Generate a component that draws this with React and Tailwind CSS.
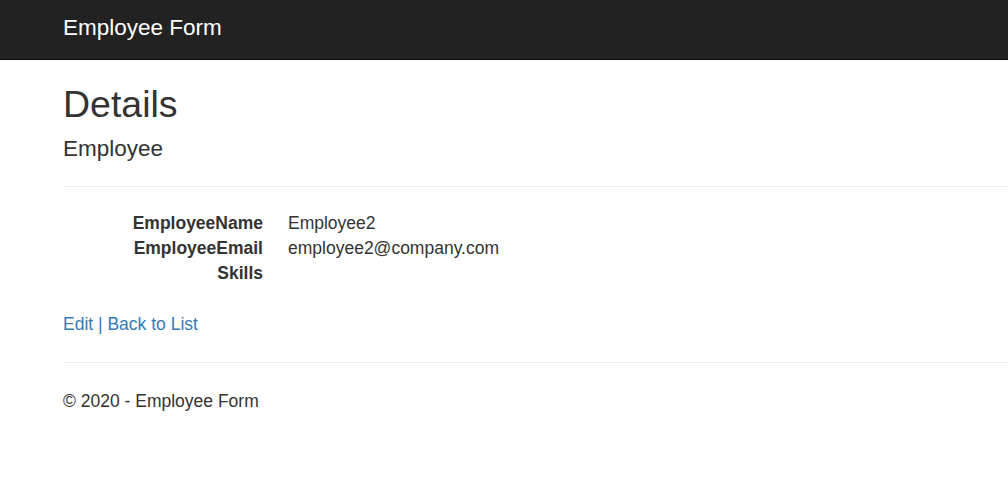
export default function App() {
    const rows = [
        ['EmployeeName', 'Employee2'],
        ['EmployeeEmail', 'employee2@company.com'],
        ['Skills', ''],
    ];

    return (
        <div className="min-h-[491px] bg-white text-[#333] font-['Liberation_Sans',Arial,sans-serif] text-[17.5px] leading-[25px]">
            <nav className="h-[60px] bg-[#222] border-b border-[#080808] flex items-center pl-[63px]">
                <span className="text-white text-[22.5px] leading-[25px] -mt-[4px]">Employee Form</span>
            </nav>

            <div className="pl-[63px]">
                <h2 className="text-[37.5px] leading-[41px] mt-[24px]">Details</h2>

                <div>
                    <h4 className="text-[22.5px] leading-[25px] mt-[11px]">Employee</h4>
                    <hr className="border-t border-[#eee] mt-[25px]" />
                    <dl className="mt-[24px]">
                        {rows.map(([label, value]) => (
                            <div key={label} className="flex">
                                <dt className="w-[200px] text-right font-bold shrink-0">{label}</dt>
                                <dd className="ml-[25px]">{value}</dd>
                            </div>
                        ))}
                    </dl>
                </div>

                <p className="mt-[26px]">
                    <a href="#" className="text-[#337ab7]">Edit</a>
                    <span className="text-[#337ab7]"> | </span>
                    <a href="#" className="text-[#337ab7]">Back to List</a>
                </p>

                <hr className="border-t border-[#eee] mt-[25px]" />
                <footer className="mt-[26px]">
                    <p>© 2020 - Employee Form</p>
                </footer>
            </div>
        </div>
    );
}
